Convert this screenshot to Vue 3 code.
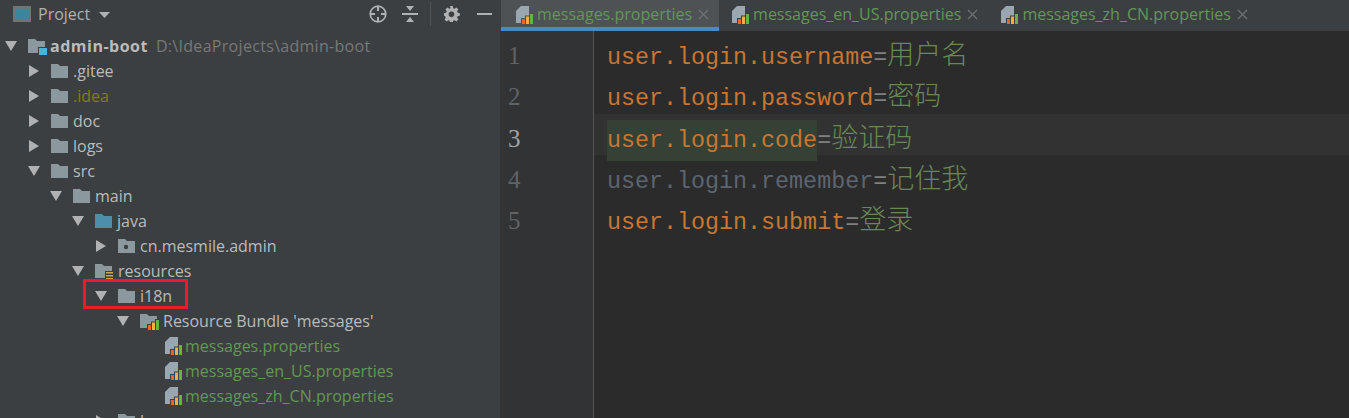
<script setup>
const rows = [
  { x: 5, open: true, icon: 'module', text: 'admin-boot', hint: 'D:\\IdeaProjects\\admin-boot', bold: true },
  { x: 28, open: false, icon: 'folder', text: '.gitee' },
  { x: 28, open: false, icon: 'folder', text: '.idea', cls: 'olive' },
  { x: 28, open: false, icon: 'folder', text: 'doc' },
  { x: 28, open: false, icon: 'folder', text: 'logs' },
  { x: 28, open: true, icon: 'folder', text: 'src' },
  { x: 50, open: true, icon: 'folder', text: 'main' },
  { x: 72, open: true, icon: 'java', text: 'java' },
  { x: 95, open: false, icon: 'pkg', text: 'cn.mesmile.admin' },
  { x: 72, open: true, icon: 'res', text: 'resources' },
  { x: 95, open: true, icon: 'folder', text: 'i18n' },
  { x: 117, open: true, icon: 'bundle', text: "Resource Bundle 'messages'" },
  { x: 140, icon: 'file', text: 'messages.properties', cls: 'green' },
  { x: 140, icon: 'file', text: 'messages_en_US.properties', cls: 'green' },
  { x: 140, icon: 'file', text: 'messages_zh_CN.properties', cls: 'green' },
  { x: 95, open: false, icon: 'folder', text: 'l' }
]
const tabs = [
  { name: 'messages.properties', active: true },
  { name: 'messages_en_US.properties' },
  { name: 'messages_zh_CN.properties' }
]
const lines = [
  { key: 'user.login.username', val: '用户名' },
  { key: 'user.login.password', val: '密码' },
  { key: 'user.login.code', val: '验证码', current: true },
  { key: 'user.login.remember', val: '记住我', muted: true },
  { key: 'user.login.submit', val: '登录' }
]
</script>

<template>
  <div class="ide">
    <aside class="project">
      <header class="head">
        <svg class="pico" width="18" height="16" viewBox="0 0 18 16"><rect width="18" height="16" fill="#6e7577"/><rect x="2" y="4" width="14" height="10" fill="#3d84a3"/></svg>
        <span class="ptitle">Project</span>
        <svg class="caret" width="12" height="7" viewBox="0 0 12 7"><path d="M0 0h11L5.500 6z" fill="#afb1b3"/></svg>
        <span class="grow"></span>
        <svg class="tool t1" width="18" height="18" viewBox="0 0 18 18" fill="none" stroke="#afb1b3"><circle cx="9" cy="9" r="7.800" stroke-width="1.700"/><path d="M9 1v5M9 12v5M1 9h5M12 9h5" stroke-width="2"/></svg>
        <svg class="tool t2" width="16" height="18" viewBox="0 0 16 18"><path d="M0 8h16v2H0z M4 1h8L8 6z M4 17h8l-4-5z" fill="#afb1b3"/></svg>
        <span class="sep"></span>
        <svg class="tool t3" width="16" height="16" viewBox="0 0 16 16"><path fill="#afb1b3" fill-rule="evenodd" d="M6.500 0h3l.4 2.300 1.500.7L13.400 1.600l2 2.100-1.300 2 .6 1.500 2.300.4v3l-2.300.4-.6 1.500 1.300 2-2 2.100-2-1.400-1.500.7-.4 2.100h-3l-.4-2.100-1.500-.7-2 1.400-2-2.100 1.300-2-.6-1.500L0 10.600v-3l2.300-.4.600-1.500-1.300-2 2-2.100 2 1.400 1.500-.7zM8 6a3 3 0 1 0 0 6 3 3 0 0 0 0-6z" transform="scale(.93)"/></svg>
        <span class="minus"></span>
      </header>
      <div class="tree">
        <div v-for="r in rows" :key="r.text" class="row" :style="{ paddingLeft: r.x + 'px' }">
          <span class="arrow" :class="{ down: r.open, right: r.open === false }"></span>
          <span class="icon" :class="r.icon">
            <svg v-if="r.icon !== 'file'" width="20" height="18" viewBox="0 0 20 18">
              <path d="M1 2h7l2 2h8v12H1z" :fill="r.icon === 'java' ? '#4d8eaa' : '#8b999f'"/>
              <circle v-if="r.icon === 'pkg'" cx="9" cy="10" r="2.200" fill="#3c3f41"/>
              <g v-if="r.icon === 'module'"><rect x="11" y="10" width="9" height="8" fill="#3c3f41"/><rect x="12" y="11" width="8" height="7" fill="#40b6e0"/></g>
              <g v-if="r.icon === 'res'"><rect x="11" y="9" width="9" height="9" fill="#3c3f41"/><path d="M12 10h7v1.500h-7zM12 13h7v1.500h-7zM12 16h7v1.500h-7z" fill="#d9a343"/></g>
              <g v-if="r.icon === 'bundle'"><path d="M8 18v-6h4V9.500h4V7h4v11z" fill="#3c3f41"/><rect x="9" y="13" width="3" height="5" fill="#f26522"/><rect x="13" y="10.500" width="3" height="7.500" fill="#f4af3d"/><rect x="17" y="8" width="3" height="10" fill="#62b543"/></g>
            </svg>
            <svg v-else width="17" height="18" viewBox="0 0 17 18">
              <path d="M5 0h8v17H0V5z" fill="#9aa7b0"/>
              <path d="M5 18v-6h4V9.500h4V7h4v11z" fill="#3c3f41"/>
              <rect x="6" y="13" width="3" height="5" fill="#f26522"/><rect x="10" y="10.500" width="3" height="7.500" fill="#f4af3d"/><rect x="14" y="8" width="3" height="10" fill="#62b543"/>
            </svg>
          </span>
          <span class="label" :class="[r.cls, { bold: r.bold }]">{{ r.text }}</span>
          <span v-if="r.hint" class="hint">{{ r.hint }}</span>
        </div>
        <div class="mark"></div>
      </div>
    </aside>
    <main class="main">
      <nav class="tabs">
        <div v-for="t in tabs" :key="t.name" class="tab" :class="{ active: t.active }">
          <svg width="17" height="18" viewBox="0 0 17 18">
            <path d="M5 0h8v17H0V5z" fill="#9aa7b0"/>
            <path d="M5 18v-6h4V9.500h4V7h4v11z" :fill="t.active ? '#4e5254' : '#3c3f41'"/>
            <rect x="6" y="13" width="3" height="5" fill="#f26522"/><rect x="10" y="10.500" width="3" height="7.500" fill="#f4af3d"/><rect x="14" y="8" width="3" height="10" fill="#62b543"/>
          </svg>
          <span class="tname">{{ t.name }}</span>
          <svg class="x" width="11" height="11" viewBox="0 0 11 11"><path d="M1 1l9 9M10 1l-9 9" stroke="#6e7173" stroke-width="1.300"/></svg>
        </div>
      </nav>
      <div class="editor">
        <div class="gutter">
          <div v-for="(l, i) in lines" :key="i" class="num" :class="{ cur: l.current }">{{ i + 1 }}</div>
        </div>
        <div class="code">
          <div v-for="l in lines" :key="l.key" class="line" :class="{ current: l.current }">
            <span class="key" :class="{ muted: l.muted, hit: l.current }">{{ l.key }}</span><span class="eq">=</span><span class="val">{{ l.val }}</span>
          </div>
        </div>
      </div>
    </main>
  </div>
</template>

<style>
html, body { margin: 0; background: #2b2b2b; overflow: hidden; }
</style>

<style scoped>
.ide { display: flex; width: 1349px; height: 418px; overflow: hidden; font-family: "Open Sans", "Noto Sans", sans-serif; }
.project { width: 500px; flex: none; background: #3c3f41; box-sizing: border-box; }
.head { height: 30px; display: flex; align-items: center; padding: 0 0 2px 13px; box-sizing: border-box; }
.ptitle { margin-left: 7px; color: #afb1b3; font-size: 16px; }
.caret { margin-left: 9px; margin-top: 2px; }
.grow { flex: 1; }
.t1 { margin-right: 15px; }
.t2 { margin-right: 12px; }
.sep { width: 1px; height: 24px; background: #515456; margin-right: 13px; }
.t3 { margin-right: 17px; }
.minus { width: 15px; height: 2px; background: #afb1b3; margin-right: 8px; }
.tree { position: relative; padding-top: 3px; }
.row { height: 25px; display: flex; align-items: center; font-size: 16px; color: #bbbbbb; white-space: nowrap; }
.arrow { width: 22px; height: 12px; flex: none; position: relative; }
.arrow.down::before { content: ""; position: absolute; left: 0; top: 1px; border-left: 6px solid transparent; border-right: 6px solid transparent; border-top: 10px solid #afb1b3; }
.arrow.right::before { content: ""; position: absolute; left: 1px; top: 0; border-top: 6px solid transparent; border-bottom: 6px solid transparent; border-left: 10px solid #afb1b3; }
.icon { width: 23px; height: 18px; flex: none; display: flex; }
.icon.res, .icon.bundle { width: 24px; }
.icon.file { padding-left: 3px; width: 20px; }
.label.bold { font-weight: 700; letter-spacing: .5px; }
.olive { color: #808000; }
.green { color: #629755; }
.hint { margin-left: 8px; color: #787878; letter-spacing: .3px; }
.mark { position: absolute; left: 83px; top: 249px; width: 105px; height: 30px; border: 3px solid #ed1c24; box-sizing: border-box; }
.main { flex: 1; display: flex; flex-direction: column; min-width: 0; }
.tabs { height: 31px; flex: none; display: flex; background: #3c3f41; padding-left: 1px; }
.tab { display: flex; align-items: flex-start; padding: 6px 10px 0 13px; box-sizing: border-box; height: 31px; color: #629755; font-size: 16px; }
.tab.active { background: #4e5254; border-bottom: 4px solid #4a88c7; padding-left: 15px; }
.tname { margin-left: 4px; line-height: 16px; }
.x { margin-left: 6px; margin-top: 3px; }
.editor { flex: 1; display: flex; background: #2b2b2b; }
.gutter { width: 93px; flex: none; background: #313335; border-right: 1px solid #555; padding-top: 4px; }
.num { height: 41.300px; padding-left: 8px; font: 25px/41.300px "Liberation Serif", serif; color: #606366; }
.num.cur { color: #a4a3a3; }
.code { flex: 1; }
.line { height: 41.300px; line-height: 43px; padding-left: 13px; font-family: "Liberation Mono", monospace; font-size: 23.350px; white-space: nowrap; }
.line.current { background: #323232; }
.key { color: #c97630; display: inline-block; height: 41.300px; }
.key.hit { background: #344134; }
.key.muted { color: #5c6570; }
.eq { color: #808080; }
.val { color: #6a8759; font-family: "Noto Sans CJK SC", sans-serif; font-size: 27px; font-weight: 300; }
</style>
